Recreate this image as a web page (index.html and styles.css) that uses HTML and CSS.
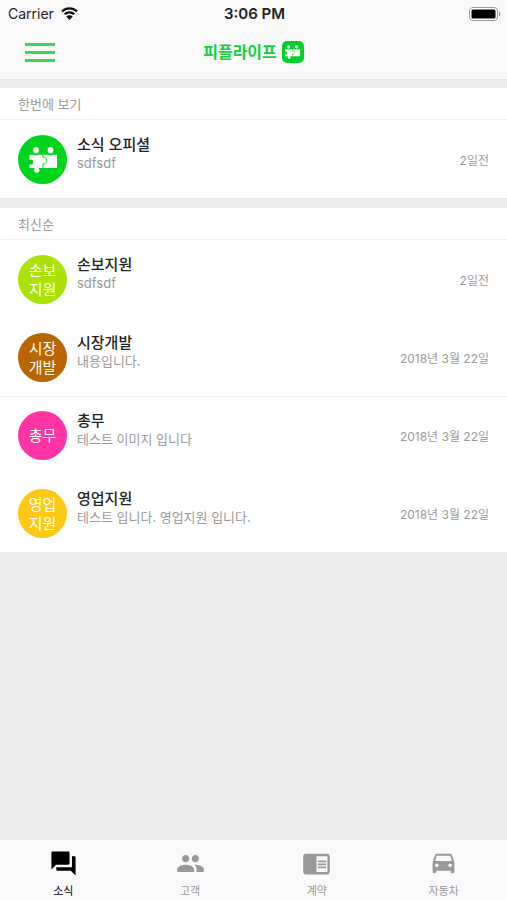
FILE: index.html
```html
<!DOCTYPE html>
<html lang="ko">
<head>
<meta charset="utf-8">
<meta name="viewport" content="width=device-width, initial-scale=1">
<title>피플라이프</title>
<link rel="stylesheet" href="styles.css">
</head>
<body>
<svg class="defs" aria-hidden="true">
  <symbol id="puzzle" viewBox="0 0 28 26">
    <ellipse cx="7" cy="3.200" rx="2.800" ry="3.200"/>
    <ellipse cx="21.500" cy="3.200" rx="2.800" ry="3.200"/>
    <path d="M.5 7.800H4.500a2.800 1.200 0 0 0 5 0H19a2.800 1.200 0 0 0 5 0h4V21H10.200c-.8 1 .4 1.500.2 2.700-.2 1.300-1.300 2-2.700 2s-2.600-.8-2.700-2c-.1-1.200 1.100-1.700.2-2.700H.5v-3.600c.9-.7 1.600.3 2.500 0 1.600-.7 1.600-4.200 0-4.900-.9-.3-1.600.7-2.500 0z"/>
    <path d="M14 7.800v2.800c1-.3 1.600-.6 2.400 0 1.800 1.200 1.800 4.800 0 6-.8.600-1.400.200-2.400-.1V21" fill="none" stroke="#00d224" stroke-width=".9"/>
  </symbol>
</svg>
<div class="app">
  <header class="header">
    <div class="status">
      <span class="carrier">Carrier
        <svg class="wifi" viewBox="0 0 17 13" aria-hidden="true"><path d="M1 4.500a10.600 10.600 0 0 1 15 0M3.700 7.300a6.800 6.800 0 0 1 9.600 0" fill="none" stroke="#111" stroke-width="2.300"/><path d="M8.500 13 5.200 9.500a4.700 4.700 0 0 1 6.600 0z" fill="#111"/></svg>
      </span>
      <span class="time">3:06 PM</span>
      <svg class="battery" viewBox="0 0 32 14" aria-hidden="true"><rect x=".5" y=".5" width="28" height="13" rx="3.500" fill="#fff" stroke="#999"/><rect x="2.500" y="2.500" width="24" height="9" rx="1.500"/><path d="M30 4.500c2 .8 2 4.200 0 5z" fill="#999"/></svg>
    </div>
    <div class="bar">
      <button class="menu" type="button" aria-label="메뉴"><span></span><span></span><span></span></button>
      <h1 class="brand">피플라이프 <span class="badge"><svg aria-hidden="true"><use href="#puzzle"/></svg></span></h1>
    </div>
  </header>

  <main class="content">
    <section class="group">
      <h2>한번에 보기</h2>
      <ul>
        <li class="row">
          <span class="avatar official"><svg aria-hidden="true"><use href="#puzzle"/></svg></span>
          <div class="text"><h3>소식 오피셜</h3><p lang="en">sdfsdf</p></div>
          <time>2일전</time>
        </li>
      </ul>
    </section>
    <section class="group">
      <h2>최신순</h2>
      <ul>
        <li class="row">
          <span class="avatar lime">손보<br>지원</span>
          <div class="text"><h3>손보지원</h3><p lang="en">sdfsdf</p></div>
          <time>2일전</time>
        </li>
        <li class="row">
          <span class="avatar brown">시장<br>개발</span>
          <div class="text"><h3>시장개발</h3><p>내용입니다.</p></div>
          <time>2018년 3월 22일</time>
        </li>
        <li class="row ruled">
          <span class="avatar pink">총무</span>
          <div class="text"><h3>총무</h3><p>테스트 이미지 입니다</p></div>
          <time>2018년 3월 22일</time>
        </li>
        <li class="row">
          <span class="avatar yellow">영업<br>지원</span>
          <div class="text"><h3>영업지원</h3><p>테스트 입니다. 영업지원 입니다.</p></div>
          <time>2018년 3월 22일</time>
        </li>
      </ul>
    </section>
  </main>

  <nav class="tabs">
    <a class="active" href="#news"><svg viewBox="0 0 24 24" aria-hidden="true"><path d="M21 6h-2v9H6v2c0 .55.45 1 1 1h11l4 4V7c0-.55-.45-1-1-1zm-4 6V3c0-.55-.45-1-1-1H3c-.55 0-1 .45-1 1v14l4-4h10c.55 0 1-.45 1-1z"/></svg>소식</a>
    <a href="#customers"><svg viewBox="0 0 24 24" aria-hidden="true"><path d="M16 11c1.660 0 2.990-1.340 2.990-3S17.660 5 16 5s-3 1.340-3 3 1.340 3 3 3zm-8 0c1.660 0 2.990-1.340 2.990-3S9.660 5 8 5 5 6.340 5 8s1.340 3 3 3zm0 2c-2.330 0-7 1.170-7 3.500V19h14v-2.500c0-2.330-4.670-3.500-7-3.500zm8 0c-.29 0-.62.02-.97.05 1.160.84 1.970 1.970 1.970 3.450V19h6v-2.500c0-2.330-4.670-3.500-7-3.500z"/></svg>고객</a>
    <a href="#contracts"><svg viewBox="0 0 24 24" aria-hidden="true"><path d="M13 12h7v1.500h-7zm0-2.500h7V11h-7zm0 5h7V16h-7zM21 4H3c-1.100 0-2 .9-2 2v13c0 1.100.9 2 2 2h18c1.100 0 2-.9 2-2V6c0-1.100-.9-2-2-2zm0 15h-9V6h9v13z"/></svg>계약</a>
    <a href="#cars"><svg viewBox="0 0 24 24" aria-hidden="true"><path d="M18.920 5.010C18.720 4.420 18.160 4 17.500 4h-11c-.66 0-1.210.42-1.420 1.010L3 11v8c0 .55.45 1 1 1h1c.55 0 1-.45 1-1v-1h12v1c0 .55.45 1 1 1h1c.55 0 1-.45 1-1v-8l-2.080-5.990zM6.500 15c-.83 0-1.500-.67-1.500-1.500S5.670 12 6.500 12s1.500.67 1.500 1.500S7.330 15 6.500 15zm11 0c-.83 0-1.500-.67-1.500-1.500s.67-1.500 1.500-1.500 1.500.67 1.500 1.500-.67 1.500-1.500 1.500zM5 10l1.500-4.500h11L19 10H5z"/></svg>자동차</a>
  </nav>
</div>
</body>
</html>
```

FILE: styles.css
```css
* {
  box-sizing: border-box;
}

body,
h1,
h2,
h3,
p,
ul {
  margin: 0;
  padding: 0;
}

body {
  background: #e9ebec;
  color: #222;
  font-family: Inter, "Noto Sans CJK KR", sans-serif;
}

.defs {
  position: absolute;
  width: 0;
  height: 0;
}

.app {
  display: flex;
  flex-direction: column;
  min-height: 100vh;
}

.header {
  background: #f9f9f9;
  border-bottom: 1px solid #e6e8e9;
}

.status {
  display: grid;
  grid-template-columns: 1fr auto 1fr;
  align-items: center;
  height: 27px;
  padding: 0 6px 0 8px;
  font-size: 14px;
}

.carrier {
  display: flex;
  align-items: center;
  gap: 7px;
}

.wifi {
  width: 17px;
  height: 13px;
}

.time {
  font-size: 15px;
  font-weight: 600;
}

.battery {
  justify-self: end;
  width: 32px;
  height: 14px;
}

.bar {
  display: grid;
  grid-template-columns: 1fr auto 1fr;
  align-items: center;
  height: 52px;
  padding: 0 25px 2px;
}

.menu {
  display: flex;
  flex-direction: column;
  gap: 5px;
  width: 30px;
  padding: 0;
  border: 0;
  background: none;
}

.menu span {
  width: 100%;
  height: 3px;
  background: #3ad65c;
}

.brand {
  display: flex;
  align-items: center;
  gap: 5px;
  color: #12d13c;
  font-size: 16px;
  line-height: 24px;
  font-weight: 700;
}

.badge {
  display: grid;
  place-items: center;
  width: 22px;
  height: 22px;
  border-radius: 5px;
  background: #00d02c;
}

.badge svg {
  width: 15px;
  height: 14px;
  fill: #fff;
}

.content {
  display: flex;
  flex: 1;
  flex-direction: column;
  gap: 10px;
  padding-top: 8px;
}

.group {
  background: #fff;
}

.group h2 {
  padding: 6px 18px;
  border-bottom: 1px solid #f1f2f3;
  color: #999;
  font-family: "Noto Sans CJK KR", sans-serif;
  font-size: 13px;
  line-height: 19px;
  font-weight: 400;
}

.group ul {
  list-style: none;
}

.row {
  display: flex;
  align-items: center;
  gap: 10px;
  height: 78px;
  padding: 0 18px;
  border-top: 1px solid transparent;
}

.ruled {
  border-color: #f1f2f3;
}

.avatar {
  display: grid;
  place-content: center;
  flex: none;
  width: 49px;
  height: 49px;
  border-radius: 50%;
  color: #fff;
  font-size: 15px;
  line-height: 19px;
}

.avatar svg {
  width: 28px;
  height: 26px;
  fill: #fff;
}

.official {
  background: #00d41c;
}

.lime {
  background: #aae205;
}

.brown {
  background: #ba6500;
}

.pink {
  background: #ff35a5;
}

.yellow {
  background: #ffc814;
}

.text {
  flex: 1;
  align-self: flex-start;
  padding-top: 14px;
}

.text h3 {
  font-size: 15px;
  line-height: 19px;
  font-weight: 500;
}

.text p {
  color: #999;
  font-family: "Noto Sans CJK KR", sans-serif;
  font-size: 13px;
  line-height: 18px;
}

.text p:lang(en) {
  font-family: Inter, sans-serif;
}

.row time {
  color: #999;
  font-size: 12px;
}

.tabs {
  display: grid;
  grid-template-columns: repeat(4, 1fr);
  height: 60px;
  background: #f9f9f9;
}

.tabs a {
  display: flex;
  flex-direction: column;
  align-items: center;
  gap: 5px;
  padding-top: 9px;
  color: #999;
  font-size: 11px;
  line-height: 16px;
  text-decoration: none;
}

.tabs svg {
  width: 29px;
  height: 29px;
  fill: currentColor;
}

.tabs .active {
  color: #000;
}
```
